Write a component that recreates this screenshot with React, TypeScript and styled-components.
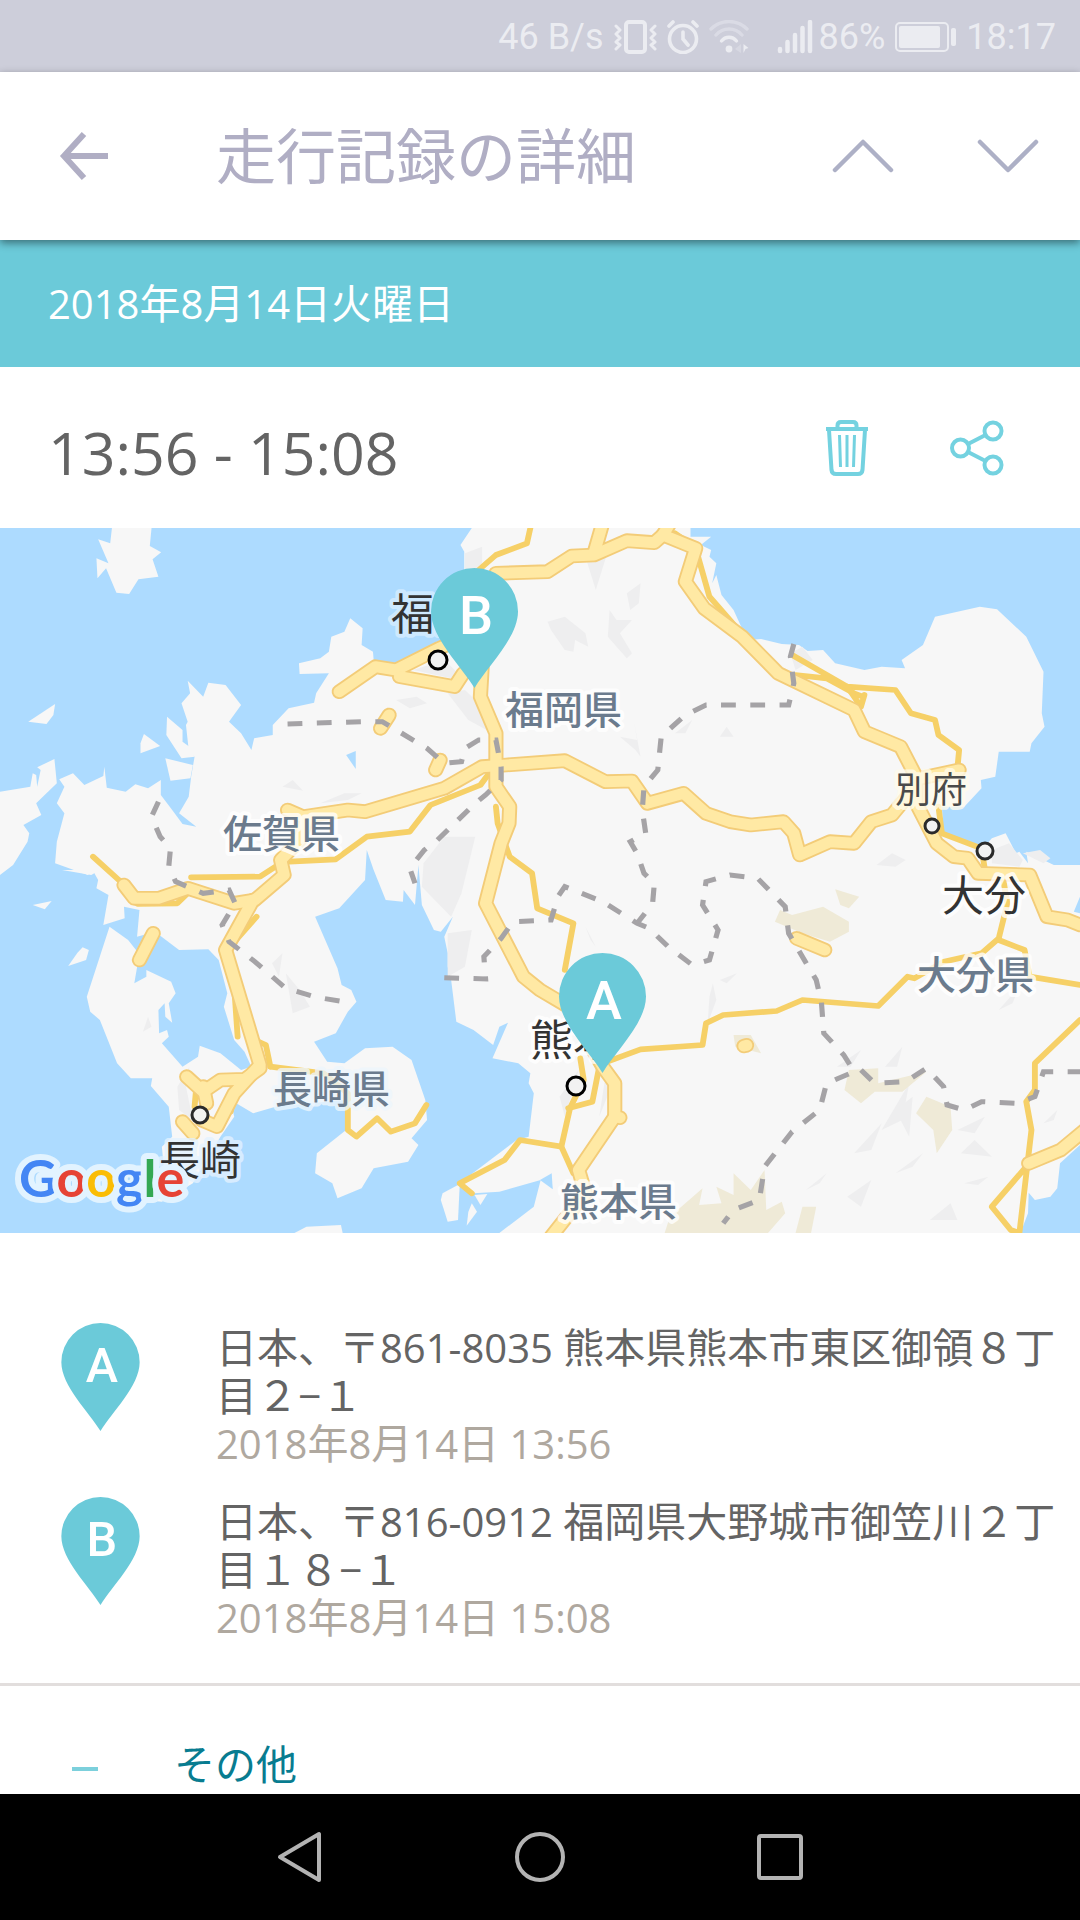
import React from "react";
import styled, { createGlobalStyle } from "styled-components";

const teal = "#6bcad9";

const GlobalStyle = createGlobalStyle`
  * { box-sizing: border-box; }
  html, body { margin: 0; padding: 0; background: #fff; }
  body { font-family: "Open Sans", "Noto Sans CJK JP", sans-serif; color: #646464; }
  h1, p, ol { margin: 0; padding: 0; font-weight: 400; }
  button { appearance: none; margin: 0; padding: 0; border: 0; background: none; font: inherit; color: inherit; cursor: pointer; }
  svg { display: block; flex: none; }
`;

const Screen = styled.div`
  min-height: 100vh;
  display: flex;
  flex-direction: column;
`;

const StatusBar = styled.div`
  height: 72px;
  display: flex;
  align-items: center;
  justify-content: flex-end;
  gap: 10px;
  padding: 2px 24px 0 0;
  background: #cdceda;
  color: #ebecf1;
  font-family: Roboto, sans-serif;
  font-size: 36px;
  line-height: 48px;
`;

const Signal = styled.div`
  display: flex;
  align-items: center;
  gap: 6px;
  padding-left: 18px;
`;

const AppBar = styled.header`
  position: relative;
  z-index: 1;
  height: 168px;
  display: flex;
  align-items: center;
  padding: 0 39px 0 54px;
  background: #fff;
  color: #b0aec4;
  box-shadow: 0 3px 8px rgba(0, 0, 0, 0.45);
`;

const Title = styled.h1`
  flex: 1;
  padding-left: 102px;
  font-size: 60px;
  line-height: 72px;
  font-weight: 400;
`;

const IconButton = styled.button<{ $size: number }>`
  width: ${(p) => p.$size}px;
  height: ${(p) => p.$size}px;
  display: grid;
  place-items: center;
`;

const Steps = styled.div`
  display: flex;
  gap: 79px;
`;

const Latin = styled.span`
  font-size: 40px;
  line-height: 40px;
`;

const DateBand = styled.p`
  padding: 39px 48px 40px;
  background: ${teal};
  color: #fff;
  font-size: 41px;
  line-height: 48px;
`;

const TimeRow = styled.div`
  height: 161px;
  display: flex;
  align-items: center;
  justify-content: space-between;
  padding: 0 75px 0 48px;
`;

const TimeText = styled.p`
  padding-top: 8px;
  font-size: 59px;
  line-height: 72px;
`;

const Actions = styled.div`
  display: flex;
  gap: 74px;
  color: #74d2e0;
`;

const MapFrame = styled.div`
  svg { width: 100%; height: auto; }
`;

const Stops = styled.ol`
  list-style: none;
  display: flex;
  flex-direction: column;
  gap: 30px;
  padding: 90px 16px 42px 61px;
  border-bottom: 3px solid #e2dedd;
`;

const Stop = styled.li`
  display: grid;
  grid-template-columns: 79px 1fr;
  column-gap: 76px;
  font-size: 41px;
  line-height: 48px;
`;

const Address = styled.p`
  color: #646464;
`;

const StopTime = styled.p`
  color: #afa89f;
`;

const OtherButton = styled.button`
  display: flex;
  align-items: center;
  gap: 76px;
  padding: 54px 0 6px 72px;
  color: #087c90;
  font-size: 41px;
  line-height: 48px;
  text-align: left;
`;

const Dash = styled.span`
  width: 26px;
  height: 4px;
  margin-top: 10px;
  background: #7cd0dc;
`;

const NavBar = styled.nav`
  height: 126px;
  margin-top: auto;
  display: flex;
  justify-content: center;
  background: #000;
  color: #b3b3b3;
`;

const NavButton = styled.button`
  width: 240px;
  display: grid;
  place-items: center;
`;

function PinShape({ letter }: { letter: string }) {
  return (
    <>
      <path d="M43.5 120C31 99 0 70 0 43.5A43.5 43.5 0 0 1 87 43.5C87 70 56 99 43.5 120Z" fill={teal} />
      <text x="45" y="66" textAnchor="middle" fontFamily="Roboto, sans-serif" fontSize="54" fontWeight="500" fill="#fff">
        {letter}
      </text>
    </>
  );
}

/* Runs of Latin digits are set one pixel smaller than the Japanese around them. */
function Mixed({ text }: { text: string }) {
  return (
    <>
      {text.split(/([\x20-\x7e]+)/).map((run, i) => (i % 2 ? <Latin key={i}>{run}</Latin> : run))}
    </>
  );
}

const land = [
  "1370,24 1337,75 1348,95 1348,150 1372,240 1330,340 1255,375 1150,430 1085,420 1083,395 1050,375 1053,325 1017,295 1000,335 962,350 955,395 930,415 868,430 870,462 955,460 918,520 912,548 838,565 792,615 792,645 738,655 730,690 700,640 665,605 700,555 655,495 605,488 590,530 545,482 552,520 527,550 545,605 540,615 548,690 565,710 555,770 548,830 520,880 570,920 530,912 500,870 467,825 467,780 430,805 393,793 365,815 310,803 303,740 300,768 245,795 212,760 172,778 187,800 165,850 187,880 165,965 160,1030 255,1065 270,1052 285,1080 280,1105 315,1125 300,1215 362,1195 360,1160 405,1170 398,1250 450,1235 520,1290 605,1288 635,1320 660,1420 650,1460 680,1560 710,1595 730,1640 700,1650 640,1600 580,1577 575,1610 530,1640 470,1570 490,1550 485,1530 462,1540 460,1470 478,1450 480,1490 500,1508 490,1450 510,1420 497,1385 425,1350 425,1370 390,1390 400,1330 395,1290 372,1260 318,1220 252,1430 262,1475 290,1500 340,1630 380,1675 442,1675 438,1698 490,1760 500,1850 470,1880 480,1990 420,2040 470,2045 560,1990 640,1850 680,1790 670,1740 735,1780 800,1760 1000,1740 1005,1830 920,1900 915,1960 965,1990 980,2035 1050,2005 1085,1945 1185,1925 1215,1875 1195,1855 1240,1800 1235,1740 1195,1620 1140,1580 1060,1585 1000,1630 950,1625 912,1565 975,1540 1010,1475 1035,1445 1020,1410 992,1395 980,1345 915,1190 985,1165 1060,1080 1065,990 1085,1050 1120,1140 1170,1145 1172,1110 1205,1155 1215,1035 1225,1155 1260,1230 1280,1235 1315,1190 1290,1250 1300,1300 1300,1340 1310,1380 1325,1505 1375,1530 1432,1575 1450,1520 1475,1508 1430,1615 1505,1630 1540,1660 1535,1690 1550,1720 1535,1850 1500,1860 1340,1985 1375,2020 1450,2015 1570,1980 1555,2040 1550,2060 1450,2139 2963,2139 2985,2080 2987,2018 3005,2040 3050,2030 3070,2005 3078,1930 3136,1875 3136,1180 3118,1175 3136,1130 3136,1035 3060,1035 2980,995 2985,1030 2960,995 2950,1000 2920,940 2880,955 2850,990 2740,945 2735,860 2800,860 2850,805 2848,780 2890,770 2900,695 2990,695 2995,670 3033,620 3025,580 3030,455 2980,350 2895,268 2845,260 2715,290 2680,375 2618,420 2628,445 2560,440 2510,450 2425,430 2390,390 2345,393 2320,375 2270,372 2210,357 2170,360 2130,270 2095,225 2080,165 2068,190 2080,130 2060,110 2065,90 2035,75 2065,50 2005,50 2005,24",
  "325,24 320,70 285,58 315,130 280,115 283,175 308,145 338,218 375,222 402,178 460,170 443,118 468,97 435,78 440,24",
  "82,605 160,552 155,585 135,612",
  "418,642 465,678 408,700 408,670",
  "485,590 530,630 530,665 550,680 565,710 527,715 483,645",
  "480,715 560,735 553,775 495,782",
  "0,815 88,800 95,760 105,765 108,800 118,750 108,742 158,717 165,790 105,850 120,885 68,915 85,940 80,965 38,1035 0,1065",
  "180,1050 290,1050 265,1065",
  "95,1155 150,1143 130,1168",
  "240,1282 258,1290 250,1320 198,1338 225,1298",
  "855,2139 890,2120 990,2115 995,2139",
  "1285,2020 1335,1992 1330,2100 1300,2105 1280,2040",
  "1370,2050 1385,2075 1355,2117 1360,2075",
  "1378,2025 1415,2022 1395,2055",
];

const lakes = ["1005,705 1033,693 1033,747", "1568,1980 1602,1960 1605,2008"];

const relief = [
  "1350,100 1400,80 1400,160 1350,160",
  "1590,305 1640,290 1700,340 1708,380 1670,360 1665,395 1640,390 1600,330",
  "1770,270 1790,300 1835,300 1800,340 1835,400 1820,415 1765,350",
  "1200,450 1290,420 1330,460 1310,475",
  "1300,520 1350,510 1420,580 1430,640 1360,600",
  "1700,110 1760,110 1730,210",
  "1820,220 1860,190 1855,250 1830,270",
  "1230,1030 1290,950 1380,950 1340,1120 1310,1190 1225,1100",
  "1300,1240 1370,1230 1350,1340 1300,1370",
  "2880,990 2930,970 2970,1020 2960,1040 2880,1030",
  "2295,400 2330,380 2360,420 2310,450",
  "550,1640 540,1700 560,1800 520,1770 515,1700",
  "1625,1730 1680,1650 1640,1790",
  "1780,1640 1775,1700 1740,1790 1755,1690",
  "2545,1035 2590,1000 2630,1020 2600,1040",
  "2970,1000 3020,990 3050,1015 3030,1030",
  "820,800 850,780 880,812",
  "930,850 1000,820 1050,820 1010,840",
  "1150,540 1210,530 1240,550 1190,565",
  "1800,650 1850,660 1840,600 1860,710 1845,690",
  "1960,640 2010,600 1990,640",
  "2090,650 2110,620 2130,650",
  "2430,1640 2500,1590 2470,1640",
  "2560,1830 2640,1690 2620,1800",
  "2480,1900 2560,1810 2530,1890",
  "2600,1770 2650,1730 2640,1850",
  "2570,1640 2620,1580 2605,1640",
  "2780,1830 2860,1790 2830,1840",
  "2790,1900 2830,1860 2880,1910",
  "2600,1960 2680,1900 2650,1940",
  "2460,2030 2530,1980 2500,2060",
  "2700,2100 2760,2050 2780,2100",
  "2340,2010 2400,1960 2380,1990",
  "2800,1990 2870,1970 2840,1995",
  "2070,1390 2080,1440 2055,1510 2060,1430",
  "2090,1380 2140,1360 2110,1390",
  "1700,1220 1730,1280 1715,1260",
  "830,1360 870,1410 900,1460 850,1480",
  "430,1490 440,1520 415,1535",
  "790,1330 820,1300 810,1370",
  "2900,1470 2960,1400 2940,1450",
  "3030,1810 3070,1770 3060,1800",
];

const parks = [
  "2425,1108 2495,1130 2465,1165 2440,1155",
  "2265,1170 2300,1185 2390,1160 2465,1205 2465,1235 2410,1265 2330,1240 2250,1205",
  "2465,1650 2550,1645 2550,1690 2690,1655 2620,1715 2540,1715 2500,1750 2452,1710",
  "2690,1730 2760,1760 2765,1830 2720,1900 2710,1830 2660,1780",
  "1930,2139 1945,2090 2040,2005 2030,2055 2095,2050 2080,2000 2130,2025 2130,1960 2180,2010 2220,1950 2225,2070 2270,2045 2280,2080 2230,2139",
  "2310,2139 2330,2060 2370,2060 2355,2139",
  "2130,1545 2180,1545 2210,1600 2135,1580",
];

const minorRoads = [
  "1540,24 1530,70 1440,105 1390,150",
  "1420,760 1395,795 1250,855 1190,935 1065,950 975,1018 840,1025",
  "555,1072 755,1070 800,1040",
  "270,1010 345,1080 370,1100",
  "400,1152 515,1150 545,1120",
  "1440,860 1445,910 1480,1010 1545,1060 1560,1165 1665,1210 1640,1350",
  "2020,85 2060,230 2170,360",
  "1960,40 2030,90",
  "2300,405 2460,500 2600,510 2645,580 2715,600 2725,645 2785,690 2780,745",
  "2310,465 2400,475 2480,520 2505,530",
  "2460,500 2500,560 2510,525",
  "2725,860 2735,940 2850,985 2860,1050",
  "1750,1630 1860,1588 2040,1575 2050,1510 2100,1485 2255,1473 2330,1440 2550,1458 2635,1370 2655,1375 2740,1325 2850,1300 2900,1255 2925,1150 2915,1090",
  "2900,1260 2975,1290 2990,1370 3136,1395",
  "3136,1500 3005,1630 3005,1710 2980,1745 2995,1830 2960,2139 2935,2130 2880,2060 2980,1940",
  "1685,1615 1695,1680 1655,1765 1630,1880 1665,1960",
  "1740,1640 1720,1745 1650,1765",
  "1630,1880 1510,1860 1465,1920 1335,1990 1370,2020",
  "785,1640 940,1660 1010,1720 1010,1830 1035,1850 1095,1795 1135,1835 1205,1810 1238,1755",
  "745,1190 660,1290",
  "740,1560 772,1575 785,1640",
  "680,1400 690,1550",
  "570,1700 565,1760",
  "675,1740 670,1775",
];

const majorRoads = [
  "1440,160 1590,155 1660,108 1725,105 1820,62 1900,68 1925,45 2020,85 1990,185 2045,265 2155,350 2260,460 2480,570 2510,635 2615,680 2660,770 2660,850 2720,970 2770,1010 2810,1015 2840,1060 2990,1065 3040,1190 3100,1200 3136,1215",
  "1750,10 1725,100",
  "1925,45 1945,10",
  "985,515 1090,440 1150,450 1275,385 1320,365",
  "1160,470 1320,500 1345,460",
  "1400,440 1395,530 1440,640 1440,800 1480,860 1478,910 1455,970 1410,1150 1520,1370 1568,1410 1650,1460 1750,1640 1785,1690 1785,1790 1800,1793",
  "1785,1790 1680,1950 1700,2020 1600,2150",
  "835,870 880,890 1010,870 1060,875 1290,805 1400,740 1470,735 1640,722 1758,785 1835,783 1880,850 1985,820 2050,880 2120,905 2180,915 2275,905 2305,940 2322,1005 2410,965 2480,970 2530,905 2590,885 2650,810",
  "2670,775 2785,750",
  "890,900 870,960 815,1020 825,1065 740,1140 680,1150 545,1105 460,1135 390,1135 360,1095",
  "735,1140 655,1290 755,1635 680,1720 630,1820 585,1800",
  "755,1645 710,1678 640,1680 590,1715 542,1670",
  "590,1700 600,1750",
  "530,1805 560,1840",
  "445,1240 405,1320",
  "1130,585 1105,625",
  "1278,720 1265,750",
  "2313,1255 2395,1290",
  "2160,1578 2168,1576",
  "2987,1930 3080,1890 3150,1830",
];

const borders = [
  "835,612 1050,605 1110,605 1240,685 1290,730 1340,725 1350,685 1390,660 1440,660 1455,740 1455,780 1410,825 1380,850 1330,900 1270,960 1232,990 1190,1045 1205,1090",
  "460,845 440,890 465,950 495,985 490,1040 510,1085 590,1120 665,1110 683,1150 645,1215 665,1265 740,1325 830,1405 920,1432 1015,1448",
  "1290,1373 1410,1377 1405,1310 1455,1255 1490,1205 1600,1200 1620,1130 1640,1100 1750,1145 1850,1210 1885,1225 1940,1280 2010,1335 2060,1320 2085,1230 2040,1155 2050,1085 2120,1065 2200,1075 2280,1160 2290,1240 2370,1380 2385,1445 2392,1540 2450,1605 2480,1655 2400,1690 2380,1770 2300,1835 2220,1940 2205,2040 2130,2070 2100,2110",
  "2500,1650 2540,1690 2630,1685 2690,1645 2740,1700 2750,1755 2800,1770 2850,1745 2950,1750 3005,1730 3030,1655 3136,1655",
  "2305,372 2295,410 2305,490 2290,555 2050,555 1990,585 1920,650 1910,750 1870,800 1865,870 1875,940 1830,965 1850,1000 1870,1060 1900,1090 1895,1150 1850,1210",
];

type Label = { text: string; x: number; y: number; size: number; kind: "city" | "town" | "pref"; halo: string };
const labels: Label[] = [
  { text: "福岡", x: 391, y: 102, size: 43, kind: "city", halo: "#d6edff" },
  { text: "福岡県", x: 505, y: 196, size: 39, kind: "pref", halo: "#fff" },
  { text: "佐賀県", x: 223, y: 320, size: 39, kind: "pref", halo: "#fff" },
  { text: "別府", x: 895, y: 275, size: 36, kind: "town", halo: "#fffbec" },
  { text: "大分", x: 942, y: 383, size: 42, kind: "city", halo: "#fff" },
  { text: "大分県", x: 917, y: 461, size: 39, kind: "pref", halo: "#fff" },
  { text: "長崎県", x: 273, y: 575, size: 39, kind: "pref", halo: "#eef6fd" },
  { text: "長崎", x: 159, y: 647, size: 41, kind: "city", halo: "#e3f2ff" },
  { text: "熊本", x: 530, y: 528, size: 43, kind: "city", halo: "#fff" },
  { text: "熊本県", x: 560, y: 688, size: 39, kind: "pref", halo: "#fff" },
];
const labelColor = { city: "#333", town: "#4a4a4a", pref: "#6b7b8d" };

const towns = [
  [438, 132, 9],
  [932, 298, 7],
  [985, 323, 8],
  [200, 587, 8],
  [576, 558, 9],
];

function Lines({ list, color, width }: { list: string[]; color: string; width: number }) {
  return (
    <g fill="none" stroke={color} strokeWidth={width} strokeLinecap="round" strokeLinejoin="round">
      {list.map((p) => <polyline key={p} points={p} />)}
    </g>
  );
}

function Shapes({ list, color }: { list: string[]; color: string }) {
  return <g fill={color}>{list.map((p) => <polygon key={p} points={p} />)}</g>;
}

function RouteMap() {
  return (
    <MapFrame>
      <svg viewBox="0 0 1080 705" role="img" aria-label="九州の地図">
        <rect width="1080" height="705" fill="#addbff" />
        <g transform="translate(0 -8) scale(0.34439 0.33333)">
          <Shapes list={land} color="#f7f7f7" />
          <Shapes list={lakes} color="#addbff" />
          <Shapes list={relief} color="#eeeeef" />
          <Shapes list={parks} color="#efead7" />
          <Lines list={minorRoads} color="#f6d067" width={17} />
          <Lines list={majorRoads} color="#f3cc78" width={44} />
          <Lines list={majorRoads} color="#ffe9a4" width={33} />
          <g fill="none" stroke="#a5a3a6" strokeWidth="15" strokeDasharray="43 42">
            {borders.map((p) => <polyline key={p} points={p} />)}
          </g>
        </g>
        <g fontFamily="'Noto Sans CJK JP', sans-serif" paintOrder="stroke" strokeLinejoin="round">
          {labels.map((l) => (
            <text key={l.text} x={l.x} y={l.y} fontSize={l.size} fontWeight={l.kind === "pref" ? 500 : 400}
              fill={labelColor[l.kind]} stroke={l.halo} strokeOpacity="0.8" strokeWidth="8">
              {l.text}
            </text>
          ))}
        </g>
        {towns.map(([x, y, r]) => (
          <circle key={x} cx={x} cy={y} r={r} fill="#f2f2f2" stroke={r === 9 ? "#000" : "#2a2a2a"} strokeWidth="3" />
        ))}
        <text x="19" y="669" fontFamily="Lato, sans-serif" fontSize="52" fontWeight="700" paintOrder="stroke"
          stroke="#e2f3ff" strokeWidth="12" strokeLinejoin="round">
          <tspan fill="#4486f4">G</tspan><tspan fill="#e64335">o</tspan><tspan fill="#fabd05">o</tspan><tspan fill="#4486f4">g</tspan><tspan fill="#34a853">l</tspan><tspan fill="#e64335">e</tspan>
        </text>
        <g transform="translate(431 40)"><PinShape letter="B" /></g>
        <g transform="translate(559 425)"><PinShape letter="A" /></g>
      </svg>
    </MapFrame>
  );
}

const stops = [
  { letter: "A", address: "日本、〒861-8035 熊本県熊本市東区御領８丁目２−１", time: "2018年8月14日 13:56" },
  { letter: "B", address: "日本、〒816-0912 福岡県大野城市御笠川２丁目１８−１", time: "2018年8月14日 15:08" },
];

function StatusIcons() {
  return (
    <>
      <svg width="43" height="34" viewBox="0 0 43 34" fill="none" stroke="currentColor" strokeLinecap="round">
        <rect x="12" y="2" width="19" height="30" rx="3" strokeWidth="4" />
        <path d="M2 6l4 4-4 4 4 4-4 4 4 3-4 4M41 6l-4 4 4 4-4 4 4 4-4 3 4 4" strokeWidth="3" strokeLinejoin="round" />
      </svg>
      <svg width="32" height="34" viewBox="0 0 32 34" fill="none" stroke="currentColor" strokeWidth="3.6" strokeLinecap="round">
        <circle cx="16" cy="19" r="13.5" />
        <path d="M16 12v7l5 6M2 6l4-4M30 6l-4-4" />
      </svg>
      <svg width="40" height="34" viewBox="0 0 40 34" fill="none" stroke="currentColor" strokeWidth="3.4" strokeLinecap="round">
        <path d="M2 9C12-1 28-1 38 9M7 15c7-8 19-8 26 0" opacity="0.45" />
        <path d="M12.5 21c4-5 11-5 15 0" />
        <circle cx="20" cy="29" r="3.4" fill="currentColor" stroke="none" />
        <path d="M34.5 24l5 4-3 1-2 4z" fill="currentColor" stroke="none" />
        <path d="M32 24v9l-6-4z" fill="currentColor" stroke="none" opacity="0.35" />
      </svg>
    </>
  );
}

export default function App() {
  return (
    <Screen>
      <GlobalStyle />
      <StatusBar>
        <span>46 B/s</span>
        <StatusIcons />
        <Signal>
          <svg width="36" height="34" viewBox="0 0 36 34" stroke="currentColor" strokeWidth="4.5" strokeLinecap="round">
            <path d="M3 29v2M10.5 22v9M18 15v16M25.5 8v23M33 2v29" />
          </svg>
          <span>86%</span>
        </Signal>
        <svg width="61" height="30" viewBox="0 0 61 30">
          <rect x="1" y="1" width="52" height="28" rx="4" fill="none" stroke="currentColor" strokeWidth="2" />
          <rect x="4" y="4" width="41" height="22" rx="2" fill="currentColor" />
          <rect x="56" y="6" width="5" height="18" rx="2" fill="currentColor" />
        </svg>
        <span>18:17</span>
      </StatusBar>
      <AppBar>
        <IconButton $size={60} aria-label="戻る">
          <svg width="50" height="50" viewBox="0 0 50 50" fill="none" stroke="currentColor" strokeWidth="6">
            <path d="M25 3L5 25l20 22M5 25h44" />
          </svg>
        </IconButton>
        <Title>走行記録の詳細</Title>
        <Steps>
          <IconButton $size={66} aria-label="前の記録">
            <svg width="62" height="34" viewBox="0 0 62 34" fill="none" stroke="#adb0c6" strokeWidth="4.5" strokeLinecap="round" strokeLinejoin="round">
              <path d="M3 31L31 3l28 28" />
            </svg>
          </IconButton>
          <IconButton $size={66} aria-label="次の記録">
            <svg width="62" height="34" viewBox="0 0 62 34" fill="none" stroke="#adb0c6" strokeWidth="4.5" strokeLinecap="round" strokeLinejoin="round">
              <path d="M3 3l28 28L59 3" />
            </svg>
          </IconButton>
        </Steps>
      </AppBar>
      <main>
        <DateBand><Mixed text="2018年8月14日火曜日" /></DateBand>
        <TimeRow>
          <TimeText>13:56 - 15:08</TimeText>
          <Actions>
            <IconButton $size={56} aria-label="削除">
              <svg width="44" height="56" viewBox="0 0 44 56" fill="none" stroke="currentColor" strokeWidth="4">
                <path d="M1 9h42M12.5 8V5.5q0-3.500 3.500-3.500h12q3.500 0 3.500 3.500V8" />
                <path d="M4 10l2.500 40q.4 4 4.500 4h22q4.100 0 4.500-4L40 10" />
                <path d="M14.5 15l1 32M22 15v32M29.5 15l-1 32" strokeWidth="3" />
              </svg>
            </IconButton>
            <IconButton $size={56} aria-label="共有">
              <svg width="56" height="56" viewBox="0 0 56 56" fill="none" stroke="currentColor" strokeWidth="4">
                <circle cx="11.5" cy="28" r="8.5" />
                <circle cx="44" cy="11" r="8.5" />
                <circle cx="44" cy="45" r="8.5" />
                <path d="M19 24l17.5-9M19 32l17.5 9" />
              </svg>
            </IconButton>
          </Actions>
        </TimeRow>
        <RouteMap />
        <Stops>
          {stops.map((s) => (
            <Stop key={s.letter}>
              <svg width="79" height="108" viewBox="0 0 87 120"><PinShape letter={s.letter} /></svg>
              <div>
                <Address><Mixed text={s.address} /></Address>
                <StopTime><Mixed text={s.time} /></StopTime>
              </div>
            </Stop>
          ))}
        </Stops>
        <OtherButton>
          <Dash />
          <span>その他</span>
        </OtherButton>
      </main>
      <NavBar>
        <NavButton aria-label="戻る">
          <svg width="50" height="52" viewBox="0 0 50 52" fill="none" stroke="currentColor" strokeWidth="4" strokeLinejoin="round">
            <path d="M44 3v46L5 26z" />
          </svg>
        </NavButton>
        <NavButton aria-label="ホーム">
          <svg width="50" height="50" viewBox="0 0 50 50" fill="none" stroke="currentColor" strokeWidth="4">
            <circle cx="25" cy="25" r="23" />
          </svg>
        </NavButton>
        <NavButton aria-label="アプリ履歴">
          <svg width="46" height="46" viewBox="0 0 46 46" fill="none" stroke="currentColor" strokeWidth="4">
            <rect x="2" y="2" width="42" height="42" rx="2" />
          </svg>
        </NavButton>
      </NavBar>
    </Screen>
  );
}
